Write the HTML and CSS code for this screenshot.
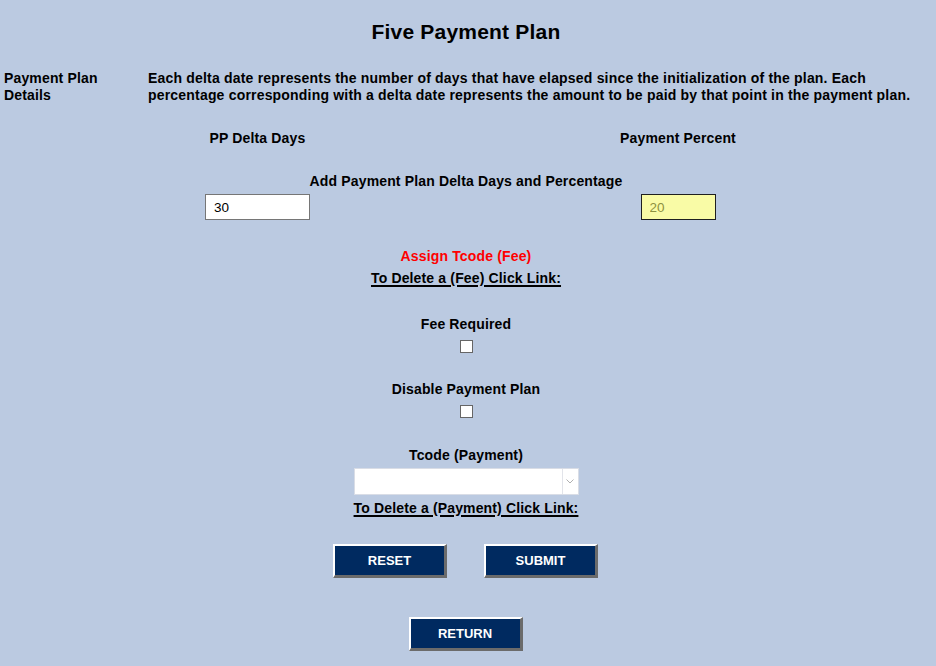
FILE: index.html
```html
<!DOCTYPE html>
<html lang="en">
<head>
<meta charset="utf-8">
<title>Five Payment Plan</title>
<link rel="stylesheet" href="styles.css">
</head>
<body>
<form class="page">
  <h1 class="title">Five Payment Plan</h1>

  <div class="details">
    <div class="details-label">Payment Plan Details</div>
    <div class="details-text">Each delta date represents the number of days that have elapsed since the initialization of the plan. Each percentage corresponding with a delta date represents the amount to be paid by that point in the payment plan.</div>
  </div>

  <div class="cols cols-head">
    <div class="col">PP Delta Days</div>
    <div class="col">Payment Percent</div>
  </div>

  <div class="center add-row">Add Payment Plan Delta Days and Percentage</div>

  <div class="cols cols-inputs">
    <div class="col"><input class="field field-days" type="text" value="30"></div>
    <div class="col"><input class="field field-pct" type="text" value="20" readonly></div>
  </div>

  <div class="center assign">Assign Tcode (Fee)</div>
  <div class="center link-note">To Delete a (Fee) Click Link:</div>

  <div class="center label gap-fee">Fee Required</div>
  <div class="center check-row"><input class="check" type="checkbox"></div>

  <div class="center label gap-lg">Disable Payment Plan</div>
  <div class="center check-row"><input class="check" type="checkbox"></div>

  <div class="center label gap-fee">Tcode (Payment)</div>
  <div class="center select-row">
    <div class="select">
      <select class="select-input"><option></option></select>
      <span class="select-arrow">
        <svg width="8" height="5" viewBox="0 0 8 5"><path d="M0.5 0.5 L4 4 L7.5 0.5" fill="none" stroke="#b0b0b0" stroke-width="1"/></svg>
      </span>
    </div>
  </div>
  <div class="center link-note link-note-pay">To Delete a (Payment) Click Link:</div>

  <div class="buttons">
    <button class="btn" type="reset">RESET</button>
    <button class="btn" type="submit">SUBMIT</button>
  </div>
  <div class="buttons buttons-return">
    <button class="btn" type="button">RETURN</button>
  </div>
</form>
</body>
</html>
```

FILE: styles.css
```css
html, body {
  margin: 0;
  padding: 0;
  background: #bbcae1;
}

body {
  font-family: "Liberation Sans", Arial, sans-serif;
  font-size: 14px;
  font-weight: bold;
  letter-spacing: 0.15px;
  color: #000;
  width: 936px;
  height: 666px;
  overflow: hidden;
}

.page {
  width: 932px;
  margin: 0;
  display: flex;
  flex-direction: column;
}

.title {
  margin: 20px 0 0;
  font-size: 21px;
  letter-spacing: 0.2px;
  line-height: 24px;
  text-align: center;
}

.details {
  display: flex;
  margin-top: 26px;
  line-height: 17px;
}

.details-label {
  width: 140px;
  flex: none;
  padding-left: 4px;
}

.details-text {
  flex: 1;
  padding: 0 16px 0 4px;
  letter-spacing: 0.19px;
}

.cols {
  display: grid;
  grid-template-columns: 515px 326px;
}

.col {
  text-align: center;
  line-height: 17px;
}

.cols-head {
  margin-top: 26px;
}

.center {
  text-align: center;
  line-height: 17px;
}

.add-row {
  margin-top: 26px;
}

.cols-inputs {
  margin-top: 4px;
}

.cols-inputs .col {
  display: flex;
  justify-content: center;
}

.field {
  box-sizing: border-box;
  height: 26px;
  margin: 0;
  padding: 0 8px;
  font-family: "Liberation Sans", Arial, sans-serif;
  font-size: 13.5px;
  font-weight: normal;
  letter-spacing: 0;
  outline: none;
}

.field-days {
  width: 105px;
  border: 1px solid #767676;
  background: #fff;
  color: #000;
}

.field-pct {
  width: 75px;
  border: 1px solid #1f1f1f;
  background: #f9fba6;
  color: #8e9140;
}

.assign {
  margin-top: 28px;
  color: #ff0000;
}

.link-note {
  margin-top: 5px;
  text-decoration: underline;
  text-decoration-thickness: 2px;
  text-underline-offset: 2px;
}

.label.gap-fee {
  margin-top: 29px;
}

.label.gap-lg {
  margin-top: 28px;
}

.check-row {
  display: flex;
  justify-content: center;
  margin-top: 7px;
  line-height: 0;
}

.check {
  appearance: none;
  -webkit-appearance: none;
  box-sizing: border-box;
  width: 13px;
  height: 13px;
  margin: 0 0 0 1px;
  border: 1px solid #666;
  background: #fff;
}

.select-row {
  display: flex;
  justify-content: center;
  margin-top: 4px;
  line-height: normal;
}

.select {
  box-sizing: border-box;
  width: 225px;
  height: 27px;
  display: flex;
  border: 1px solid #d9dde6;
  background: #fff;
}

.select-input {
  appearance: none;
  -webkit-appearance: none;
  flex: 1;
  border: 0;
  margin: 0;
  background: transparent;
  font-family: "Liberation Sans", Arial, sans-serif;
  font-size: 13px;
  outline: none;
}

.select-arrow {
  width: 15px;
  flex: none;
  border-left: 1px solid #e2e4ea;
  display: flex;
  align-items: center;
  justify-content: center;
}

.link-note-pay {
  margin-top: 5px;
}

.buttons {
  display: flex;
  justify-content: center;
  gap: 37px;
  margin-top: 27px;
  padding-right: 1px;
}

.buttons-return {
  margin-top: 39px;
}

.btn {
  box-sizing: border-box;
  width: 114px;
  height: 34px;
  margin: 0;
  padding: 0;
  background: #002a60;
  color: #fff;
  font-family: "Liberation Sans", Arial, sans-serif;
  font-size: 13px;
  font-weight: bold;
  letter-spacing: 0;
  border-style: solid;
  border-width: 2px 3px 3px 2px;
  border-color: #fff #6b6b6b #6b6b6b #fff;
  cursor: pointer;
}
```
